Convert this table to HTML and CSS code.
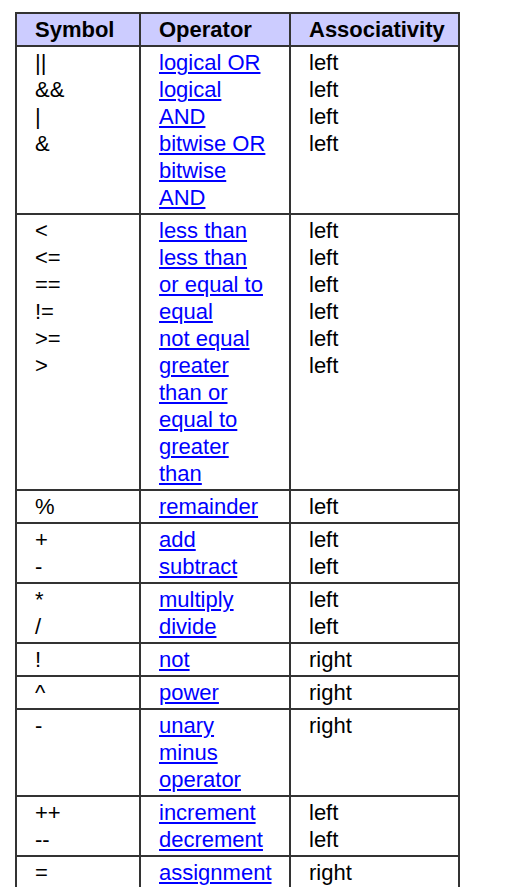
FILE: index.html
```html
<!DOCTYPE html>
<html lang="en">
<head>
<meta charset="utf-8">
<title>Operators</title>
<link rel="stylesheet" href="styles.css">
</head>
<body>
<div class="page">
<table class="ops">
  <colgroup>
    <col class="c-sym">
    <col class="c-op">
    <col class="c-assoc">
  </colgroup>
  <thead>
    <tr><th>Symbol</th><th>Operator</th><th>Associativity</th></tr>
  </thead>
  <tbody>
    <tr>
      <td>||<br>&amp;&amp;<br>|<br>&amp;</td>
      <td><a href="#">logical OR</a><br><a href="#">logical AND</a><br><a href="#">bitwise OR</a><br><a href="#">bitwise AND</a></td>
      <td>left<br>left<br>left<br>left</td>
    </tr>
    <tr>
      <td>&lt;<br>&lt;=<br>==<br>!=<br>&gt;=<br>&gt;</td>
      <td><a href="#">less than</a><br><a href="#">less than or equal to</a><br><a href="#">equal</a><br><a href="#">not equal</a><br><a href="#">greater than or equal to</a><br><a href="#">greater than</a></td>
      <td>left<br>left<br>left<br>left<br>left<br>left</td>
    </tr>
    <tr>
      <td>%</td>
      <td><a href="#">remainder</a></td>
      <td>left</td>
    </tr>
    <tr>
      <td>+<br>-</td>
      <td><a href="#">add</a><br><a href="#">subtract</a></td>
      <td>left<br>left</td>
    </tr>
    <tr>
      <td>*<br>/</td>
      <td><a href="#">multiply</a><br><a href="#">divide</a></td>
      <td>left<br>left</td>
    </tr>
    <tr>
      <td>!</td>
      <td><a href="#">not</a></td>
      <td>right</td>
    </tr>
    <tr>
      <td>^</td>
      <td><a href="#">power</a></td>
      <td>right</td>
    </tr>
    <tr>
      <td>-</td>
      <td><a href="#">unary minus operator</a></td>
      <td>right</td>
    </tr>
    <tr>
      <td>++<br>--</td>
      <td><a href="#">increment</a><br><a href="#">decrement</a></td>
      <td>left<br>left</td>
    </tr>
    <tr>
      <td>=</td>
      <td><a href="#">assignment</a></td>
      <td>right</td>
    </tr>
  </tbody>
</table>
</div>
</body>
</html>
```

FILE: styles.css
```css
html, body {
  margin: 0;
  padding: 0;
  background: #ffffff;
}

.page {
  padding: 12px 0 0 15px;
}

.ops {
  border-collapse: collapse;
  table-layout: fixed;
  width: 443px;
  font-family: "Liberation Sans", Arial, sans-serif;
  font-size: 22px;
  line-height: 27px;
  color: #000000;
  border: 2px solid #333333;
}

.c-sym { width: 124px; }
.c-op { width: 150px; }
.c-assoc { width: 169px; }

.ops th,
.ops td {
  border: 2px solid #333333;
  text-align: left;
  vertical-align: top;
  padding: 2px 18px 2px 18px;
}

.ops th {
  background: #ccccff;
  font-weight: bold;
  white-space: nowrap;
}

.ops td:nth-child(2) {
  padding-right: 20px;
}

.ops a {
  color: #0000ff;
  text-decoration: underline;
}
```
